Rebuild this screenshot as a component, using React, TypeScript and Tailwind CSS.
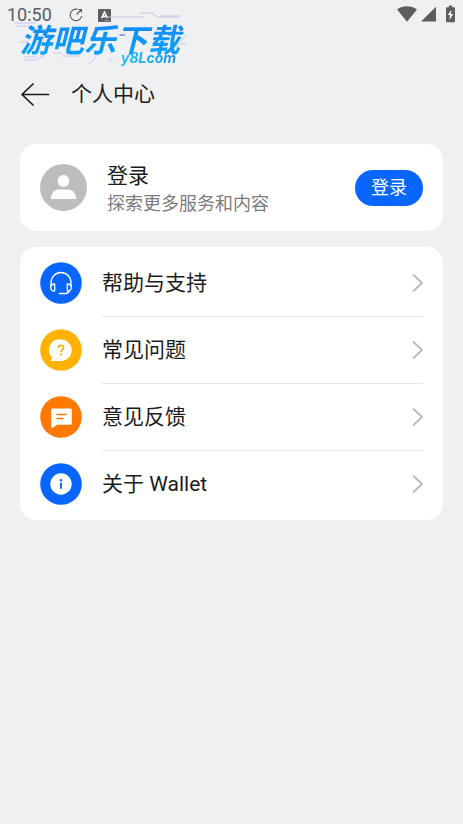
import type { ReactNode } from 'react';

function StatusBar() {
  return (
    <div className="flex h-7 items-center pl-[7px] pr-2 pt-[2px] text-[#5c5d5f]">
      <span className="text-lg leading-4">10:50</span>
      <svg className="ml-4 size-4" viewBox="0 0 16 16" fill="none" stroke="currentColor" strokeWidth="1.2" aria-hidden="true">
        <path d="M9.500 2.300A5.800 5.800 0 1 0 13.700 9" />
        <path d="M8.500 7.500 13 3M10.500 2.500h3v3" />
      </svg>
      <svg className="ml-[14px] size-[13px]" viewBox="0 0 12 12" aria-hidden="true">
        <rect width="12" height="12" rx="1" fill="#5c5d5f" />
        <path d="M3.3 8.5 6 2.8l2.7 5.7M4.2 6.8h3.600" stroke="#fff" strokeWidth="1.4" fill="none" />
        <path d="M6 10.800h4.500" stroke="#ddd" strokeWidth=".8" strokeDasharray="1 .7" />
      </svg>
      <div className="ml-auto flex items-center pb-[2px]">
        <svg className="h-4 w-5" viewBox="0 0 20 16" fill="currentColor" aria-hidden="true">
          <path d="M0 3.5C6-.9 14-.9 20 3.5L10 15.7Z" />
        </svg>
        <svg className="ml-1 h-4 w-[15px]" viewBox="0 0 15 16" fill="currentColor" aria-hidden="true">
          <path d="M0 15.5 15 .8v14.7Z" />
        </svg>
        <svg className="ml-[10px] h-[18px] w-[9px]" viewBox="0 0 9 18" aria-hidden="true">
          <path d="M2.8.5h3.4v1.8H8a1 1 0 0 1 1 1v13a1 1 0 0 1-1 1H1a1 1 0 0 1-1-1v-13a1 1 0 0 1 1-1h1.8Z" fill="currentColor" />
          <path d="M5.4 4.8 1.8 10h2.1L3.4 15 7.2 9H4.9Z" fill="#fff" />
        </svg>
      </div>
    </div>
  );
}

function Watermark() {
  return (
    <div className="pointer-events-none absolute left-[14px] top-3 h-[54px] w-[174px] font-['Noto_Sans_CJK_SC',sans-serif]">
      <svg className="absolute inset-0 size-full" viewBox="0 0 174 54" fill="none" aria-hidden="true">
        <g stroke="#c9c6ee" strokeWidth="1">
          <path d="M0 11h22M3 14h16M92 5h38M126 1h12l6 4h20M146 4h20" />
          <path d="M9 48h14l7-5M11 45h12M39 41h9M48 44h18M75 52l13-13M99 50l-5-4M158 40l14-17" />
          <path d="M5 30h9M104 23h6M166 32h6" />
        </g>
        <path d="M106 23h5M28 26h2M154 23h3" stroke="#4f62d8" />
      </svg>
      <span className="absolute left-[6px] top-2 whitespace-nowrap bg-gradient-to-b from-[#1687f5] to-[#0ba2ff] bg-clip-text pr-2 text-[32px] font-bold italic leading-[36px] text-transparent">
        游吧乐下载
      </span>
      <span className="absolute left-[107px] top-[38px] bg-gradient-to-r from-[#22bdf5] to-[#168ff5] bg-clip-text pr-1 font-[Inter,sans-serif] text-sm font-bold italic leading-4 text-transparent">
        y8Lcom
      </span>
    </div>
  );
}

function Disc({ color, children }: { color: string; children: ReactNode }) {
  return (
    <svg className="mb-[2px] size-[42px] shrink-0" viewBox="0 0 42 42" fill="none" aria-hidden="true">
      <circle cx="21" cy="21" r="20.8" fill={color} />
      {children}
    </svg>
  );
}

const items = [
  {
    label: '帮助与支持',
    icon: (
      <Disc color="#0866ff">
        <g stroke="#fff" strokeWidth="1.3" strokeLinecap="round" strokeLinejoin="round">
          <path d="M11 24v-3.5a10 10 0 0 1 20 0V24" />
          <path d="M14.7 22v7c-2.5 0-4-1.3-4-3.5s1.500-3.500 4-3.500ZM27.300 22v7c2.500 0 4-1.300 4-3.500s-1.500-3.500-4-3.500Z" />
          <path d="M29.500 28.500c-.6 2-1.800 3-3.700 3h-6.500" />
        </g>
      </Disc>
    ),
  },
  {
    label: '常见问题',
    icon: (
      <Disc color="#ffb300">
        <path d="M21 10.500a10.500 10.500 0 1 1 0 21.500h-9.700c-.7 0-.9-.7-.5-1.200l1.600-2A10.600 10.600 0 0 1 21 10.500Z" fill="#fff" />
        <path d="M18.500 18.900c0-1.700 1-2.500 2.500-2.500s2.500.9 2.500 2.300c0 1.900-2.400 2-2.400 4.300" stroke="#ffb300" strokeWidth="1.700" />
        <circle cx="21.100" cy="25.400" r="1.100" fill="#ffb300" />
      </Disc>
    ),
  },
  {
    label: '意见反馈',
    icon: (
      <Disc color="#ff7800">
        <path d="M12.500 12.500h18a1.300 1.300 0 0 1 1.300 1.300v13.700a1.300 1.300 0 0 1-1.300 1.300H17.200l-4.900 3.100c-.6.4-1.100.1-1.100-.6V13.800a1.300 1.300 0 0 1 1.300-1.300Z" fill="#fff" />
        <path d="M17 18.500h9M17 22.500h6" stroke="#ff7800" strokeWidth="1.500" strokeLinecap="round" />
      </Disc>
    ),
  },
  {
    label: '关于 Wallet',
    icon: (
      <Disc color="#0866ff">
        <circle cx="21" cy="21" r="10.700" fill="#fff" />
        <circle cx="21" cy="17.300" r="1.200" fill="#0866ff" />
        <path d="M21 19.700v6" stroke="#0866ff" strokeWidth="1.900" />
      </Disc>
    ),
  },
];

export default function App() {
  return (
    <div className="relative min-h-screen bg-[#eff0f2] font-[Roboto,'Noto_Sans_CJK_SC',sans-serif] text-[#1b1b1b]">
      <StatusBar />
      <Watermark />
      <header className="mt-[46px] flex h-10 items-center px-5">
        <button type="button" aria-label="返回">
          <svg className="h-6 w-[30px]" viewBox="0 0 30 24" fill="none" stroke="#1b1b1b" strokeWidth="1.700" strokeLinecap="round" strokeLinejoin="round" aria-hidden="true">
            <path d="M28.500 12.500H2M13 2 2 12.500 13 23" />
          </svg>
        </button>
        <h1 className="ml-[21px] text-[21px] leading-7">个人中心</h1>
      </header>

      <main className="px-5 pt-[30px]">
        <section className="flex h-[87px] items-center rounded-2xl bg-white px-5">
          <svg className="size-[47px] shrink-0" viewBox="0 0 47 47" aria-hidden="true">
            <circle cx="23.500" cy="23.500" r="23.500" fill="#bdbdbd" />
            <circle cx="23.500" cy="17" r="5.900" fill="#fff" />
            <path d="M10.700 35c.5-5.500 3.500-9.500 7.800-9.500h10c4.300 0 7.300 4 7.800 9.500Z" fill="#fff" />
          </svg>
          <div className="ml-5 min-w-0 flex-1 pt-1">
            <h2 className="text-[21px] leading-7">登录</h2>
            <p className="text-lg leading-7 text-[#7c7c7c]">探索更多服务和内容</p>
          </div>
          <button type="button" className="h-9 shrink-0 rounded-full bg-[#0866ff] px-4 text-lg leading-7 text-white">
            登录
          </button>
        </section>

        <ul className="mt-4 rounded-2xl bg-white px-5 pb-[2px] pt-[3px]">
          {items.map((item, i) => (
            <li key={item.label}>
              <button type="button" className="flex h-[67px] w-full items-center text-left">
                {item.icon}
                <span className={`ml-5 flex h-full min-w-0 flex-1 items-center justify-between border-b ${i < items.length - 1 ? 'border-[#e5e6e8]' : 'border-transparent'}`}>
                  <span className="text-[21px] leading-7">{item.label}</span>
                  <svg className="h-5 w-[11px]" viewBox="0 0 11 20" fill="none" stroke="#b9b9b9" strokeWidth="1.800" strokeLinecap="round" strokeLinejoin="round" aria-hidden="true">
                    <path d="M1.500 2 10 10l-8.500 8" />
                  </svg>
                </span>
              </button>
            </li>
          ))}
        </ul>
      </main>
    </div>
  );
}
